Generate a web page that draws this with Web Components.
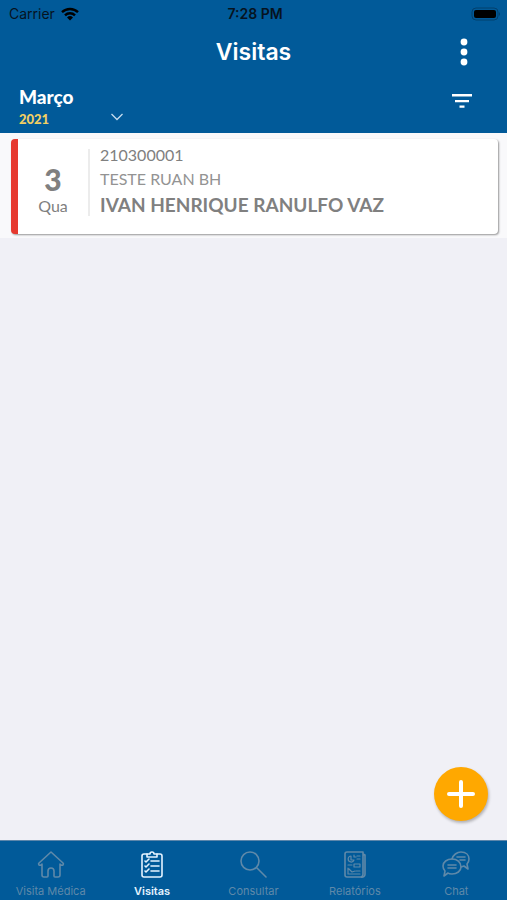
<!DOCTYPE html>
<html lang="pt-BR">
<head>
<meta charset="utf-8">
<meta name="viewport" content="width=device-width, initial-scale=1">
<title>Visitas</title>
<style>
  html, body {
    height: 100%;
    margin: 0;
  }

  body {
    --blue: #015a99;
    --amber: #ffa800;
    font-family: Inter, "Liberation Sans", sans-serif;
  }
</style>
</head>
<body>
<visits-app>
  <status-bar slot="header" carrier="Carrier" time="7:28 PM"></status-bar>
  <title-bar slot="header">Visitas</title-bar>
  <month-bar slot="header" month="Março" year="2021"></month-bar>
  <visit-card day="3" weekday="Qua">
    <span slot="code">210300001</span>
    <span slot="place">TESTE RUAN BH</span>
    <strong slot="name">IVAN HENRIQUE RANULFO VAZ</strong>
  </visit-card>
  <add-button slot="action"></add-button>
  <tab-bar slot="footer">
    <tab-item icon="home">Visita Médica</tab-item>
    <tab-item icon="visits" active>Visitas</tab-item>
    <tab-item icon="search">Consultar</tab-item>
    <tab-item icon="reports">Relatórios</tab-item>
    <tab-item icon="chat">Chat</tab-item>
  </tab-bar>
</visits-app>

<script>
const icons = {
  home: `<path d="M14 2 2 13c-1 1 0 3 2 2l1-1v11a2 2 0 0 0 2 2h3a1 1 0 0 0 1-1v-5a3 3 0 0 1 6 0v5a1 1 0 0 0 1 1h3a2 2 0 0 0 2-2V14l1 1c2 1 3-1 2-2z"/>`,
  visits: `<path d="M9 4H6a2 2 0 0 0-2 2v19a2 2 0 0 0 2 2h16a2 2 0 0 0 2-2V6a2 2 0 0 0-2-2h-3"/>
    <path d="M9 4h3a2 2 0 0 1 4 0h3v3H9z"/>
    <path d="m7 11 1 1 3-3M7 16l1 1 3-3M7 21l1 1 3-3M13 11h8M13 16h8M13 21h8"/>`,
  search: `<circle cx="11" cy="11" r="9"/><path d="m18 18 9 9"/>`,
  reports: `<path d="M20 27H6a2 2 0 0 1-2-2V4a2 2 0 0 1 2-2h16v22a3 3 0 0 1-2 3zM22 4l2 1v19a3 3 0 0 1-4 3"/>
    <path stroke-width="1.2" d="M10 6a3 3 0 1 0 3 4h-3zM13 5v2h2M16 6h3M16 9h3M7 15h4M13 14h6v3h-6zM7 18v6h12M8 19l3 3 3-1M15 21h4"/>`,
  chat: `<path d="M10 9c1-4 5-7 9-7 5 0 8 3 8 7 0 2-1 4-2 5l1 5-4-3-3 1"/>
    <path d="M10 9c5 0 9 3 9 8 0 4-4 7-9 7-2 0-3 0-4-1l-4 3 1-5c-1-1-2-3-2-5 0-4 4-7 9-7z"/>
    <path d="M15 7h8M18 10h5M6 15h8M6 18h8"/>`,
};

class VisitsApp extends HTMLElement {
  constructor() {
    super();
    this.attachShadow({ mode: 'open' }).innerHTML = `
      <style>
        :host {
          display: flex;
          flex-direction: column;
          min-height: 100%;
          background: #f0f0f6;
        }

        header {
          background: var(--blue);
          color: #fff;
        }

        main {
          display: flex;
          flex-direction: column;
          flex: 1;
        }

        .action {
          display: flex;
          justify-content: flex-end;
          margin-top: auto;
          padding: 19px;
        }
      </style>
      <header><slot name="header"></slot></header>
      <main>
        <slot></slot>
        <div class="action"><slot name="action"></slot></div>
      </main>
      <slot name="footer"></slot>
    `;
  }
}

class StatusBar extends HTMLElement {
  constructor() {
    super();
    this.attachShadow({ mode: 'open' }).innerHTML = `
      <style>
        :host {
          display: grid;
          grid-template-columns: 1fr auto 1fr;
          align-items: center;
          height: 27px;
          padding: 0 6px 0 9px;
          color: #06131f;
          font-size: 14px;
        }

        .carrier {
          display: flex;
          align-items: center;
          gap: 6px;
        }

        .time {
          font-weight: 600;
        }

        .battery {
          justify-self: end;
        }
      </style>
      <span class="carrier">
        <span>${this.getAttribute('carrier')}</span>
        <svg width="18" height="14" viewBox="0 0 18 14" fill="none" stroke="#000" stroke-width="2.4">
          <path d="M1 5.2a11.5 11.5 0 0 1 16 0M4 8.3a7 7 0 0 1 10 0"/>
          <path d="M9 13.5 6 10.5a4.3 4.3 0 0 1 6 0z" fill="#000" stroke="none"/>
        </svg>
      </span>
      <span class="time">${this.getAttribute('time')}</span>
      <svg class="battery" width="30" height="14" viewBox="0 0 30 14">
        <rect x="1" y="1" width="26" height="12" rx="4" fill="none" stroke="#03406d"/>
        <rect x="3" y="3" width="22" height="8" rx="2"/>
        <path d="M28 5q2 2 0 4z" fill="#03406d"/>
      </svg>
    `;
  }
}

class TitleBar extends HTMLElement {
  constructor() {
    super();
    this.attachShadow({ mode: 'open' }).innerHTML = `
      <style>
        :host {
          display: grid;
          grid-template-columns: 1fr auto 1fr;
          align-items: center;
          height: 50px;
          padding: 0 31px;
        }

        h1 {
          grid-column: 2;
          margin: 0;
          font-size: 23px;
          font-weight: 600;
          line-height: 32px;
        }

        button {
          display: flex;
          justify-self: end;
          padding: 0;
          border: 0;
          background: none;
        }
      </style>
      <h1><slot></slot></h1>
      <button type="button" aria-label="Mais opções">
        <svg width="24" height="28" viewBox="0 0 24 28" fill="#fff">
          <circle cx="12" cy="4" r="3.4"/>
          <circle cx="12" cy="14" r="3.4"/>
          <circle cx="12" cy="24" r="3.4"/>
        </svg>
      </button>
    `;
  }
}

class MonthBar extends HTMLElement {
  constructor() {
    super();
    this.attachShadow({ mode: 'open' }).innerHTML = `
      <style>
        :host {
          display: flex;
          justify-content: space-between;
          align-items: flex-start;
          height: 48px;
          padding: 8px 34px 0 19px;
        }

        button {
          display: flex;
          padding: 0;
          border: 0;
          background: none;
          color: #fff;
          font-family: Lato, sans-serif;
          font-weight: 900;
          text-align: left;
        }

        .picker {
          display: grid;
          grid-template-columns: 92px auto;
          align-items: center;
        }

        .month {
          grid-column: 1 / -1;
          font-size: 19px;
          line-height: 24px;
        }

        .year {
          color: #f2cf63;
          font-size: 13px;
          line-height: 20px;
        }

        .picker svg {
          margin-bottom: 4px;
        }

        .filter {
          padding-top: 8px;
        }
      </style>
      <button class="picker" type="button" aria-haspopup="listbox">
        <span class="month">${this.getAttribute('month')}</span>
        <span class="year">${this.getAttribute('year')}</span>
        <svg width="12" height="8" viewBox="0 0 12 8" fill="none" stroke="#c5dcee" stroke-width="1.3">
          <path d="m.5 1 5.5 5.5L11.5 1"/>
        </svg>
      </button>
      <button class="filter" type="button" aria-label="Filtrar">
        <svg width="22" height="16" viewBox="0 0 22 16" fill="#fff">
          <path d="M1 1h20v2.5H1zM4 7h14v2.3H4zM8.5 12.5h5v2.3h-5z"/>
        </svg>
      </button>
    `;
  }
}

class VisitCard extends HTMLElement {
  constructor() {
    super();
    this.attachShadow({ mode: 'open' }).innerHTML = `
      <style>
        :host {
          display: block;
          padding: 6px 9px 4px 11px;
          background: #f9f9fb;
          color: #808080;
          font-family: Lato, sans-serif;
        }

        article {
          display: flex;
          border-left: 7px solid #e6392f;
          border-radius: 4px;
          background: #fff;
          box-shadow: 1px 1px 2px #0006;
        }

        .date {
          display: flex;
          flex-direction: column;
          align-items: center;
          justify-content: flex-end;
          width: 70px;
          margin: 10px 0 18px;
          border-right: 2px solid #ececec;
        }

        .day {
          font-size: 30px;
          font-weight: 900;
          line-height: 34px;
        }

        .weekday {
          font-size: 16px;
          line-height: 20px;
        }

        .info {
          display: grid;
          grid-template-rows: 24px 24px 28px;
          align-items: center;
          padding: 3px 10px 16px;
          font-size: 16px;
        }

        ::slotted([slot="place"]) {
          color: #939393;
        }

        ::slotted([slot="name"]) {
          font-size: 19px;
          font-weight: 700;
        }
      </style>
      <article>
        <div class="date">
          <span class="day">${this.getAttribute('day')}</span>
          <span class="weekday">${this.getAttribute('weekday')}</span>
        </div>
        <div class="info">
          <slot name="code"></slot>
          <slot name="place"></slot>
          <slot name="name"></slot>
        </div>
      </article>
    `;
  }
}

class AddButton extends HTMLElement {
  constructor() {
    super();
    this.attachShadow({ mode: 'open' }).innerHTML = `
      <style>
        :host {
          display: block;
        }

        button {
          display: grid;
          place-items: center;
          width: 54px;
          height: 54px;
          padding: 0;
          border: 0;
          border-radius: 50%;
          background: var(--amber);
          box-shadow: 1px 2px 3px #0004;
        }
      </style>
      <button type="button" aria-label="Nova visita">
        <svg width="30" height="30" viewBox="0 0 30 30" stroke="#fff" stroke-width="4" stroke-linecap="round">
          <path d="M15 3v24M3 15h24"/>
        </svg>
      </button>
    `;
  }
}

class TabBar extends HTMLElement {
  constructor() {
    super();
    this.attachShadow({ mode: 'open' }).innerHTML = `
      <style>
        :host {
          display: block;
          border-top: 1px solid #5d86ab;
          background: var(--blue);
        }

        nav {
          display: grid;
          grid-template-columns: repeat(5, 1fr);
        }
      </style>
      <nav><slot></slot></nav>
    `;
  }
}

class TabItem extends HTMLElement {
  constructor() {
    super();
    this.attachShadow({ mode: 'open' }).innerHTML = `
      <style>
        :host {
          display: block;
          color: #5f89a9;
        }

        :host([active]) {
          color: #e4f3ff;
          font-weight: 600;
        }

        a {
          display: flex;
          flex-direction: column;
          align-items: center;
          gap: 5px;
          padding: 9px 0 1px;
          color: inherit;
          font-size: 11px;
          line-height: 16px;
          text-decoration: none;
          white-space: nowrap;
        }
      </style>
      <a href="#${this.getAttribute('icon')}">
        <svg width="28" height="28" viewBox="0 0 28 28" fill="none" stroke="currentColor" stroke-width="1.6" stroke-linejoin="round" stroke-linecap="round">
          ${icons[this.getAttribute('icon')]}
        </svg>
        <span><slot></slot></span>
      </a>
    `;
  }
}

customElements.define('visits-app', VisitsApp);
customElements.define('status-bar', StatusBar);
customElements.define('title-bar', TitleBar);
customElements.define('month-bar', MonthBar);
customElements.define('visit-card', VisitCard);
customElements.define('add-button', AddButton);
customElements.define('tab-bar', TabBar);
customElements.define('tab-item', TabItem);
</script>
</body>
</html>
